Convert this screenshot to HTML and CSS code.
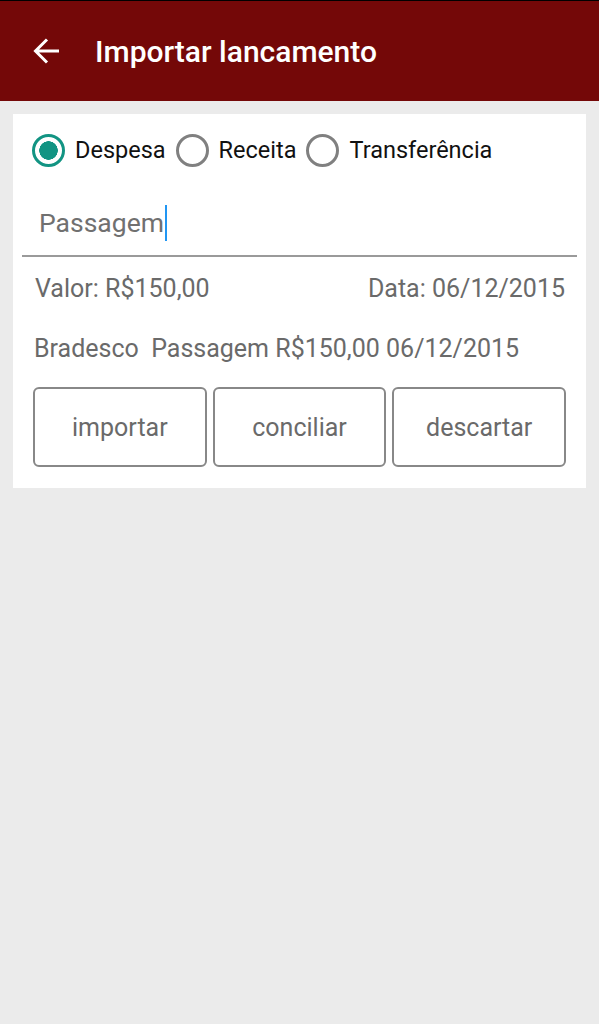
FILE: index.html
```html
<!DOCTYPE html>
<html lang="pt-BR">

<head>
    <meta charset="UTF-8">
    <meta name="viewport" content="width=device-width, initial-scale=1.0">
    <title>Importar lancamento</title>
    <link rel="stylesheet" href="styles.css">
</head>

<body>
    <header class="toolbar">
        <button class="back" aria-label="Voltar">
            <svg width="28" height="28" viewBox="0 0 28 28">
                <path d="M26 14H3M14 2.5L2.5 14L14 25.5" fill="none" stroke="#fff" stroke-width="3" />
            </svg>
        </button>
        <h1 class="title">Importar lancamento</h1>
    </header>

    <div class="card">
        <div class="radio-group">
            <label class="radio checked"><span class="circle"></span>Despesa</label>
            <label class="radio"><span class="circle"></span>Receita</label>
            <label class="radio"><span class="circle"></span>Transferência</label>
        </div>

        <div class="field">
            <span class="field-text">Passagem</span><span class="cursor"></span>
        </div>

        <div class="info-row">
            <span>Valor: R$150,00</span>
            <span>Data: 06/12/2015</span>
        </div>

        <div class="summary">Bradesco&nbsp; Passagem R$150,00 06/12/2015</div>

        <div class="actions">
            <button class="action">importar</button>
            <button class="action">conciliar</button>
            <button class="action">descartar</button>
        </div>
    </div>
</body>

</html>
```

FILE: styles.css
```css
body {
    font-family: Roboto, 'Noto Sans', sans-serif;
    background: #ebebeb;
    margin: 0;
    padding: 0;
    border-top: 1px solid #000;
}

.toolbar {
    display: flex;
    align-items: center;
    height: 100px;
    background: #740808;
    color: #fff;
}

.back {
    display: flex;
    align-items: center;
    justify-content: center;
    width: 28px;
    height: 28px;
    margin-left: 33px;
    padding: 0;
    border: none;
    background: none;
}

.title {
    margin: 0 0 0 34px;
    font-size: 30px;
    font-weight: 500;
}

.card {
    margin: 13px 13px 0 13px;
    padding: 18px 9px 21px 9px;
    background: #fff;
}

.radio-group {
    display: flex;
    align-items: center;
    height: 36px;
    padding-left: 10px;
}

.radio {
    display: flex;
    align-items: center;
    font-size: 23.5px;
    color: #111;
    margin-right: 10px;
}

.circle {
    box-sizing: border-box;
    width: 33px;
    height: 33px;
    margin-right: 10px;
    border: 3px solid #808080;
    border-radius: 50%;
}

.checked .circle {
    border-color: #129483;
    background: radial-gradient(circle, #129483 0 9px, transparent 9.5px);
}

.field {
    display: flex;
    align-items: center;
    height: 87px;
    margin-top: 2px;
    padding: 20px 0 0 17px;
    box-sizing: border-box;
    border-bottom: 2px solid #9a9a9a;
}

.field-text {
    font-size: 26.5px;
    color: #707070;
}

.cursor {
    width: 2px;
    height: 36px;
    margin-left: 1px;
    background: #2196f3;
}

.info-row {
    display: flex;
    justify-content: space-between;
    margin-top: 17px;
    padding: 0 12px 0 13px;
    font-size: 25px;
    color: #6a6a6a;
}

.summary {
    margin-top: 31px;
    padding-left: 12px;
    font-size: 25px;
    color: #6a6a6a;
}

.actions {
    display: flex;
    gap: 6px;
    margin-top: 24px;
    padding: 0 11px 0 11px;
}

.action {
    flex: 1 1 0;
    height: 80px;
    border: 2px solid #888;
    border-radius: 6px;
    background: #fff;
    font-family: Roboto, 'Noto Sans', sans-serif;
    font-size: 25px;
    color: #6a6a6a;
}
```
